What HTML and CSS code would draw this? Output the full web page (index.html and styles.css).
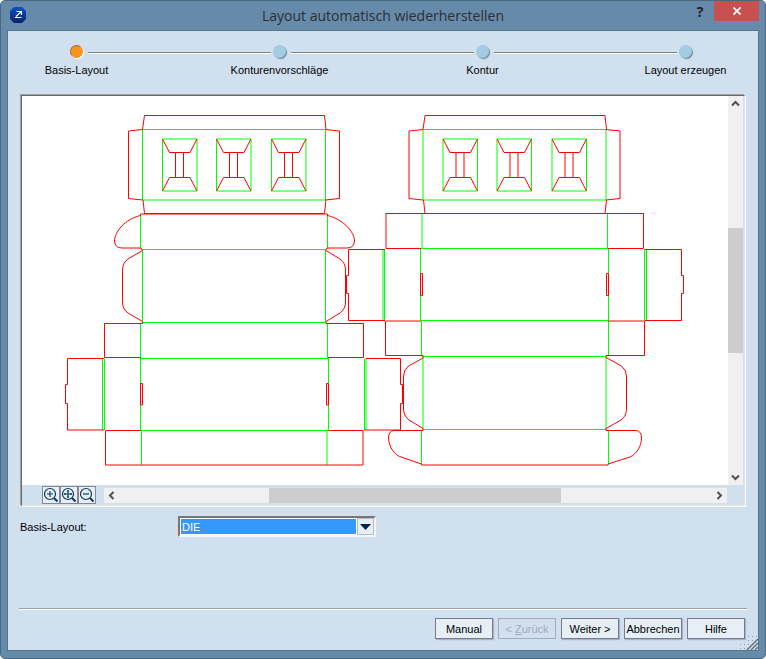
FILE: index.html
```html
<!DOCTYPE html>
<html lang="de">
<head>
  <meta charset="UTF-8" />
  <meta name="viewport" content="width=device-width, initial-scale=1.0"/>
  <title>Layout automatisch wiederherstellen</title>
  <link rel="stylesheet" href="styles.css">
</head>
<body>
  <div class="window">
    <header class="titlebar">
      <svg class="app-icon" width="16" height="16" viewBox="0 0 16 16">
        <defs>
          <linearGradient id="iconFill" x1="0" y1="0" x2="0" y2="1">
            <stop offset="0" stop-color="#0b50c4"/>
            <stop offset="1" stop-color="#03256b"/>
          </linearGradient>
        </defs>
        <path d="M4 0h8l4 4v8l-4 4H4l-4-4V4z" fill="url(#iconFill)"/>
        <path d="M6.500 4.500h5V8M11 5L6 9.500M5 10.500h6.500" fill="none" stroke="#fff" stroke-width="1.100"/>
      </svg>
      <h1>Layout automatisch wiederherstellen</h1>
      <div class="caption-buttons">
        <button class="caption-help" aria-label="Hilfe anzeigen">?</button>
        <button class="caption-close" aria-label="Schließen">
          <svg width="8" height="8" viewBox="0 0 8 8"><path d="M.5.500l7 7M7.500.500l-7 7" stroke="#fff" stroke-width="1.800"/></svg>
        </button>
      </div>
    </header>

    <main class="client">
      <ol class="steps">
        <li class="step active"><span class="dot"></span><span class="step-label">Basis-Layout</span></li>
        <li class="step"><span class="dot"></span><span class="step-label">Konturenvorschläge</span></li>
        <li class="step"><span class="dot"></span><span class="step-label">Kontur</span></li>
        <li class="step"><span class="dot"></span><span class="step-label">Layout erzeugen</span></li>
      </ol>

      <section class="viewer">
        <svg class="drawing" viewBox="22 96 706 389">
          <defs>
            <g id="window">
              <path class="crease" d="M162.500 139H197V191H162.500Z"/>
              <path class="cut" d="M162.500 139L169.500 152.500H190L197 139M162.500 191L169.500 177.500H190L197 191M175.500 152.500V177.500M183.500 152.500V177.500"/>
            </g>
            <g id="insert">
              <path class="crease" d="M142.500 129.500H325.500V200H142.500Z"/>
              <path class="cut" d="M142.500 129.500L144.500 115.500H324.500L326 129.500M142.500 129.500L128.500 131V198.500L142.500 200M325.500 129.500L339.500 131V198.500L325.500 200M143 200L144.500 213.500H324.500L326 200"/>
              <use href="#window"/>
              <use href="#window" x="54"/>
              <use href="#window" x="109"/>
            </g>
          </defs>

          <!-- left blank -->
          <use href="#insert"/>
          <path class="crease" d="M140.500 215V248.500M327.500 215V248.500M142.500 249.500H325.500V322.500H142.500ZM140.500 323.500V358M327.500 323.500V358M140.500 358.500H328M140.500 358V430.500M328.500 358V430.500M102.500 358.500V430M104.500 358.500V430M364.500 358.500V430M366 358.500V430M140 430.500H328M141.500 430.500V465M327 430.500V465"/>
          <path class="cut" d="M140.500 216V214H327.500V216"/>
          <path class="cut" d="M140.500 215.500C125 219 114.500 232 114.500 241Q115 248 122 248H141L142.500 250.500"/>
          <path class="cut" d="M327.500 215.500C343 219 354.500 232 354.500 241Q354 248 347 248H327L325.500 250.500"/>
          <path class="cut" d="M142.500 250.500L128 259Q122.500 263 122.500 270V302Q122.500 309 128 313L142.500 321.500V323.500H104.500V357.500H140.500"/>
          <path class="cut" d="M326 250.500L340 259Q345.500 263 345.500 270V302Q345.500 309 340 313L326 321.500V323.500H363.500V357.500H328"/>
          <path class="cut" d="M104 358.500H67.500V384.500H65.500V403.500H67.500V430H104M140.500 430.500H105.500V465H363V430.500H328.500M366 358.500H400.500V384.500H402.500V403.500H400.500V430H364"/>
          <path class="cut" d="M140.500 383.500H142.500V405H140.500ZM326.500 383.500H328.500V405H326.500Z"/>

          <!-- right blank -->
          <use href="#insert" x="280.500"/>
          <path class="crease" d="M422 214V248M607.500 214V248M421 248.500H608M420.500 248.500V320.500M608.500 248.500V320.500M383 249V320.500M384.500 249V320.500M644.500 249V320.500M646.500 249V320.500M421 320.500H608M421.500 320.500V355.500M608.500 320.500V355.500M423 356.500H606V429.500H423ZM421.500 430.500V465M608.500 430.500V465"/>
          <path class="cut" d="M421 248.500H386V213.500H643.500V248.500H608"/>
          <path class="cut" d="M385 249.500H348.500V275.500H346.500V293.500H348.500V320.500H385M645 249.500H681.500V275.500H683.500V293.500H681.500V320.500H645"/>
          <path class="cut" d="M421 321H385.500V355.500H423V358L408.500 366Q403.500 370 403.500 376V408Q403.500 416 409 420L423 428.500V430.500H394Q388.500 431 388.500 438C389 448 395 455 401 457L421.500 464V465H608V464L630 457C636 454 641.500 447 641.500 438Q641.500 431 636 430.500H606V428.500L621 420Q626.500 416 626.500 409V376Q626.500 370 621.500 366L606 357.500V355.500H644.500V321H608"/>
          <path class="cut" d="M420.500 273.500H422.500V295.500H420.500ZM606.500 273.500H608.500V295.500H606.500Z"/>
        </svg>

        <div class="scroll-v">
          <button class="scroll-arrow" aria-label="Nach oben"><svg width="9" height="7" viewBox="0 0 9 7"><path d="M1 5.500L4.500 2L8 5.500"/></svg></button>
          <div class="thumb"></div>
          <button class="scroll-arrow" aria-label="Nach unten"><svg width="9" height="7" viewBox="0 0 9 7"><path d="M1 1.500L4.500 5L8 1.500"/></svg></button>
        </div>

        <div class="viewer-bar">
          <div class="zoom-tools">
            <button aria-label="Vergrößern"><svg width="16" height="16" viewBox="0 0 16 16"><circle cx="7" cy="7" r="5.500"/><path d="M4 7h6M7 4v6"/><path class="handle" d="M11 11l3.500 3.500"/></svg></button>
            <button aria-label="Alles anzeigen"><svg width="16" height="16" viewBox="0 0 16 16"><circle cx="7" cy="7" r="5.500"/><path d="M3 7h8M7 3v8M6 4h2M6 10h2M4 6v2M10 6v2"/><path class="handle" d="M11 11l3.500 3.500"/></svg></button>
            <button aria-label="Verkleinern"><svg width="16" height="16" viewBox="0 0 16 16"><circle cx="7" cy="7" r="5.500"/><path d="M4 7h6"/><path class="handle" d="M11 11l3.500 3.500"/></svg></button>
          </div>
          <div class="scroll-h">
            <button class="scroll-arrow" aria-label="Nach links"><svg width="7" height="9" viewBox="0 0 7 9"><path d="M5.500 1L2 4.500L5.500 8"/></svg></button>
            <div class="thumb"></div>
            <button class="scroll-arrow" aria-label="Nach rechts"><svg width="7" height="9" viewBox="0 0 7 9"><path d="M1.500 1L5 4.500L1.500 8"/></svg></button>
          </div>
        </div>
      </section>

      <div class="field">
        <label for="baseLayout">Basis-Layout:</label>
        <div class="combo">
          <select id="baseLayout"><option>DIE</option></select>
          <span class="combo-arrow"><svg width="11" height="6" viewBox="0 0 11 6"><path d="M0 0h11L5.500 6z" fill="#03204f"/></svg></span>
        </div>
      </div>

      <footer class="actions">
        <button>Manual</button>
        <button disabled>&lt; <u>Z</u>urück</button>
        <button>Weiter &gt;</button>
        <button>Abbrechen</button>
        <button>Hilfe</button>
      </footer>

      <svg class="grip" width="18" height="15" viewBox="0 0 18 15">
        <path d="M8.500 1v14M12.500 1v14M16.500 1v14M.500 9v6M4.500 9v6" stroke="#8a97a5" stroke-dasharray="1 3"/>
        <path d="M7 15L18 4M11 15l7-7M15 15l3-3" stroke="#66737f" stroke-width="1.500"/>
      </svg>
    </main>
  </div>
</body>
</html>
```
FILE: styles.css
```css
* {
  box-sizing: border-box;
}
body {
  margin: 0;
  background: #fff;
  color: #000;
  font-family: "Liberation Sans", Arial, sans-serif;
  font-size: 11px;
  line-height: 14px;
}
button {
  font: inherit;
  color: inherit;
  padding: 0;
  border: none;
  background: none;
}
svg {
  display: block;
}
.window {
  display: flex;
  flex-direction: column;
  min-height: 100vh;
  padding: 0 6px 7px;
  background: #668aaa;
  border: 1px solid #4b687f;
  border-radius: 5px;
}

/* title bar */
.titlebar {
  display: grid;
  grid-template-columns: 1fr auto 1fr;
  height: 29px;
}
.app-icon {
  margin: 6px 0 0 3px;
}
.titlebar h1 {
  margin: 0;
  color: #2b2f34;
  font-family: "Open Sans", "Noto Sans", sans-serif;
  font-size: 14px;
  font-weight: 400;
  line-height: 29px;
}
.caption-buttons {
  display: flex;
  justify-content: flex-end;
  align-items: flex-start;
}
.caption-help {
  width: 28px;
  height: 21px;
  color: #222;
  font-family: "Open Sans", sans-serif;
  font-size: 14px;
  font-weight: 700;
}
.caption-close {
  display: flex;
  align-items: center;
  justify-content: center;
  width: 45px;
  height: 20px;
  background: #c75050;
}

.client {
  position: relative;
  flex: 1;
  display: flex;
  flex-direction: column;
  padding: 14px 12px 11px;
  background: #d1e0ef;
  border: 1px solid #56758f;
}

/* wizard steps, pulled out so the end dots sit near the edges */
.steps {
  display: flex;
  justify-content: space-between;
  margin: 0 -41px 17px -45px;
  padding: 0;
  list-style: none;
}
.step {
  position: relative;
  flex: 1;
  display: flex;
  flex-direction: column;
  align-items: center;
  gap: 4px;
}
.step + .step::before {
  content: "";
  position: absolute;
  top: 7px;
  left: calc(-50% + 11px);
  width: calc(100% - 20px);
  border-top: 1px solid #808080;
  border-bottom: 1px solid #fff;
}
.dot {
  width: 13px;
  height: 13px;
  margin-bottom: 1px;
  border-radius: 50%;
  background: #a1cde4;
  border: 1px solid #a9c9dc;
  box-shadow: 1px 1px 1px #6d8796;
}
.active .dot {
  background: #fb9320;
  border-color: #a0703a #fb9320 #fb9320 #a0703a;
  box-shadow: 1px 1px 1px #fff;
}

/* drawing area with scrollbars */
.viewer {
  display: grid;
  grid-template-columns: 1fr 15px;
  margin: 1px;
  padding: 0 1px 1px 0;
  border: 1px solid;
  border-color: #696969 #e3e3e3 #e3e3e3 #696969;
  box-shadow: -1px -1px #a0a0a0, 1px 1px #fff;
}
.drawing {
  width: 100%;
  background: #fff;
}
.drawing path {
  fill: none;
}
.cut {
  stroke: #f00;
}
.crease {
  stroke: #0f0;
}
.scroll-v,
.scroll-h {
  display: flex;
  background: #f0f0f0;
}
.scroll-v {
  flex-direction: column;
}
.scroll-h {
  flex: 1;
}
.scroll-arrow {
  display: flex;
  flex: none;
  align-items: center;
  justify-content: center;
  width: 15px;
  height: 15px;
}
.scroll-arrow path {
  fill: none;
  stroke: #505050;
  stroke-width: 2;
}
.thumb {
  background: #cdcdcd;
}
.scroll-v .thumb {
  height: 125px;
  margin: auto 0 117px;
}
.scroll-h .thumb {
  width: 292px;
  margin: 0 151px 0 auto;
}
.viewer-bar {
  grid-column: 1 / -1;
  display: flex;
  align-items: center;
  gap: 8px;
  padding: 1px 16px 0 20px;
}
.zoom-tools {
  display: flex;
}
.zoom-tools button {
  width: 18px;
  height: 18px;
  border: 1px solid #868696;
  background: #e6eff6;
}
.zoom-tools svg {
  fill: none;
  stroke: #073663;
  stroke-width: 1.2;
}
.zoom-tools .handle {
  stroke-width: 2;
}

/* form row */
.field {
  display: flex;
  align-items: center;
  margin: 9px 0 auto;
}
.field label {
  width: 158px;
}
.combo {
  position: relative;
  width: 198px;
  height: 21px;
  padding: 1px 18px 1px 1px;
  background: #fff;
  border: 2px solid;
  border-color: #777 #f5f8fb #f5f8fb #777;
}
.combo select {
  display: block;
  width: 100%;
  height: 15px;
  padding: 0 1px;
  border: none;
  border-radius: 0;
  appearance: none;
  background: #39f;
  color: #fff;
  font: inherit;
}
.combo-arrow {
  position: absolute;
  top: 0;
  right: 0;
  display: flex;
  align-items: center;
  justify-content: center;
  width: 17px;
  height: 17px;
  background: #e6eff6;
  border: 1px solid #b5bcc9;
  pointer-events: none;
}

/* bottom buttons */
.actions {
  display: flex;
  justify-content: flex-end;
  gap: 5px;
  margin: 0 -1px;
  padding: 9px 2px 0;
  border-top: 1px solid #98a0a8;
  box-shadow: inset 0 1px #fff;
}
.actions button {
  width: 58px;
  height: 21px;
  background: #e6eff6;
  border: 1px solid #7b7b90;
  box-shadow: 1px 1px 1px #a9b4c2;
}
.actions button:disabled {
  background: none;
  border-color: #a5a9bb;
  color: #a4a8b8;
  box-shadow: none;
}
.grip {
  position: absolute;
  right: 0;
  bottom: 0;
}
```
